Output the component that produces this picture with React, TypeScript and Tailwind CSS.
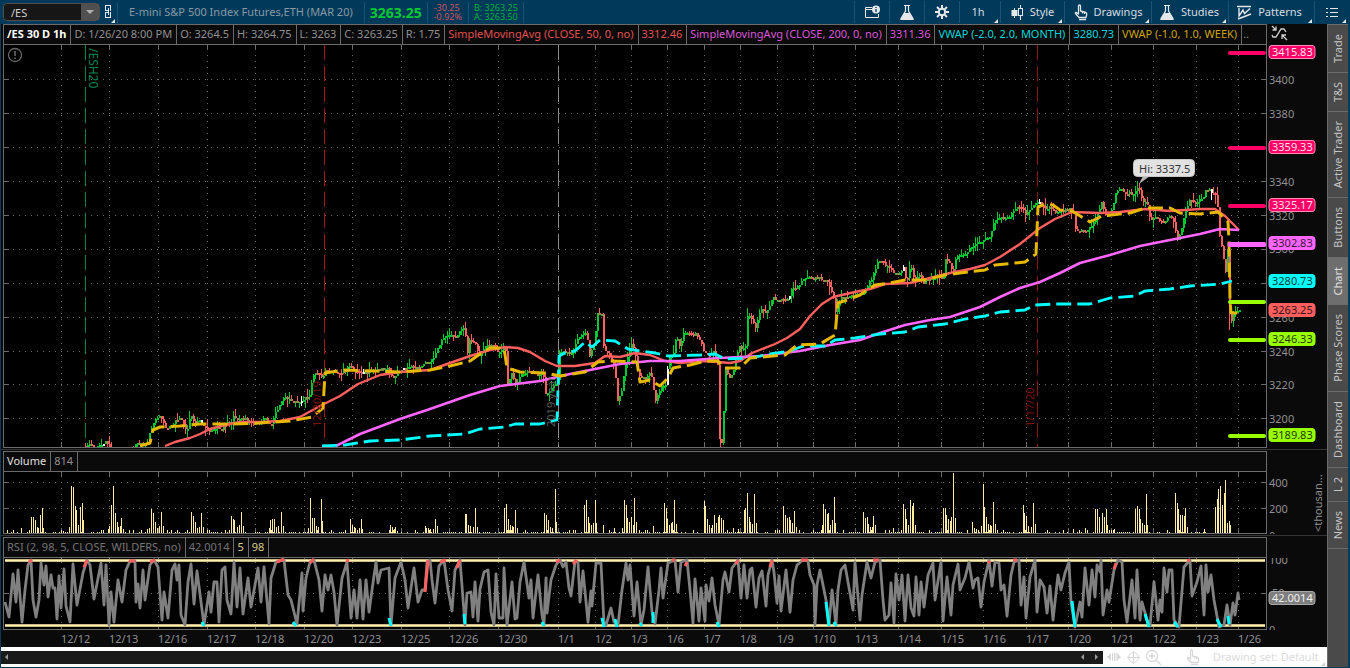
import React from 'react'

type Point = [number, number]

const RED = '#ff5f5f'
const GREEN = '#00c832'
const GOLD = '#e6b800'
const CYAN = '#00ffff'
const VIOLET = '#ff66ff'
const PINK = '#ff0066'
const LIME = '#99ff00'

const toPoints = (s: string): Point[] =>
  s.trim().split(/\s+/).map((p) => p.split(',').map(Number) as Point)

const days: [string, number][] = [
  ['12/12', 61], ['12/13', 109], ['12/16', 158], ['12/17', 207], ['12/18', 255],
  ['12/20', 304], ['12/23', 352], ['12/25', 401], ['12/26', 449], ['12/30', 498],
  ['1/1', 558], ['1/2', 595], ['1/3', 631], ['1/6', 667], ['1/7', 704],
  ['1/8', 740], ['1/9', 777], ['1/10', 813], ['1/13', 855], ['1/14', 898],
  ['1/15', 941], ['1/16', 983], ['1/17', 1026], ['1/20', 1068], ['1/21', 1111],
  ['1/22', 1153], ['1/23', 1196], ['1/26', 1238],
]

const closes = toPoints(`
  85,446 90,443 93,446 100,446 105,441 110,448 116,452 126,450 131,447 137,444 146,445 150,430 153,424 155,418
  158,416 161,419 165,427 168,428 172,424 175,419 180,418 184,427 187,430 190,416 193,420 196,423 199,419
  203,427 208,430 212,430 218,427 221,430 224,424 230,423 233,417 238,421 242,417 247,421 252,424 258,423
  264,418 270,425 274,415 279,405 284,397 290,401 298,403 304,400 309,394 313,375 317,372 322,378 325,371
  330,371 338,374 345,371 349,366 354,371 360,373 370,371 380,370 387,368 392,378 397,372 402,368 412,367
  420,367 425,363 430,360 434,357 437,348 441,340 446,335 450,336 455,337 460,330 463,329 465,337 467,354
  469,341 474,343 479,355 485,345 493,345 498,352 502,349 505,350 507,384 511,372 515,384 518,379 523,373
  530,371 538,377 542,371 545,393 551,389 557,380 559,353 565,352 571,352 575,343 580,334 586,334 589,355
  593,347 597,314 599,313 601,313 603,347 609,355 614,367 617,402 621,390 625,362 628,352 630,343 634,350
  637,370 640,377 646,380 648,369 651,378 655,402 660,387 665,385 668,360 673,352 676,336 679,347 683,334
  688,332 692,336 695,333 700,342 704,353 708,356 713,350 717,365 719,438 721,443 723,410 725,370 727,373
  730,380 734,365 738,347 742,350 745,345 747,315 753,322 755,328 760,310 766,313 772,298 777,299 782,299
  788,301 790,290 795,288 800,283 805,277 812,279 818,277 822,279 828,283 833,297 835,312 838,303 842,297
  850,295 858,294 864,292 867,285 872,277 876,265 880,258 884,264 889,267 893,272 898,274 903,268 906,282
  910,265 914,282 918,275 923,283 928,279 933,277 938,275 942,280 945,258 948,260 952,272 956,256 962,256
  967,251 973,245 978,243 984,240 990,235 994,220 998,216 1004,218 1010,216 1014,209 1020,208 1025,214
  1030,209 1035,202 1040,204 1045,208 1050,207 1055,214 1060,211 1065,210 1070,209 1073,213 1075,230
  1080,231 1085,230 1090,226 1095,221 1101,202 1105,214 1110,213 1113,202 1115,192 1120,189 1125,193
  1130,194 1135,192 1138,188 1142,200 1147,205 1150,223 1155,216 1158,219 1163,223 1168,216 1173,221
  1177,240 1181,228 1184,212 1190,199 1195,203 1200,199 1204,195 1206,188 1210,191 1215,195 1217,206
  1219,236 1222,250 1225,272 1227,250 1228,258 1229,310 1231,320 1234,310 1238,311`)

const sma50 = `165,446 175,442 190,438 200,434 210,429 225,425 240,422 260,422 280,421 300,417 320,406 340,396
  358,384 380,375 400,372 430,370 450,363 470,356 490,350 505,347 518,348 530,352 545,361 557,366 575,366
  595,363 605,356 620,357 635,353 650,355 665,361 680,363 700,361 718,362 730,363 740,361 752,353 775,344
  787,338 800,329 810,316 822,304 833,297 855,292 870,289 885,284 910,283 930,278 950,273 970,269 985,265
  1000,257 1020,244 1040,228 1055,219 1072,212 1100,213 1120,212 1145,209 1170,211 1200,209 1215,209
  1225,216 1239,230`

const sma200 = `336,446 360,434 400,419 430,409 470,395 500,386 540,381 570,374 600,368 620,364 650,361 680,361
  720,358 760,356 800,351 830,345 860,340 880,333 905,325 930,320 950,317 980,307 1000,297 1020,288 1040,282
  1060,273 1080,263 1110,255 1140,246 1170,240 1200,234 1220,229 1239,230`

const vwapMonth = `322,446 345,445 370,441 400,440 430,436 465,434 480,429 505,427 515,424 540,424 557,420 559,356
  565,353 575,351 585,342 592,347 600,340 615,341 628,349 640,351 655,353 668,356 700,355 715,354 725,359
  750,358 770,354 790,351 803,346 825,346 835,340 855,338 880,334 905,332 918,327 945,324 965,319 985,316
  1000,312 1025,310 1035,305 1055,304 1090,304 1110,298 1135,296 1145,291 1170,289 1190,286 1220,284 1232,281`

const vwapWeek = `140,446 150,443 153,430 160,427 180,426 200,424 230,424 260,423 290,421 312,417 323,408 325,373
  345,370 375,371 400,372 430,370 450,366 470,361 480,354 490,348 504,348 507,368 520,372 545,373 560,376
  585,372 598,362 610,361 637,362 640,382 650,380 660,386 668,378 673,368 690,365 705,361 718,361 724,368
  740,368 750,358 785,355 797,345 820,344 835,335 838,303 850,299 860,295 867,290 875,285 890,283 905,280
  925,280 945,275 960,273 985,270 995,265 1025,262 1036,254 1038,207 1045,204 1053,205 1060,210 1072,211
  1090,222 1102,216 1130,213 1145,208 1170,208 1180,213 1200,214 1218,212 1228,222 1229,240 1230,300
  1231,313 1238,313`

const volume = toPoints(`
  21,5 31,16 33,16 35,13 37,6 38,5 40,18 42,25 43,5 61,3 63,2 69,6 71,47 73,46 75,27 76,23 78,8 80,26 82,30
  83,13 101,3 108,4 109,7 111,28 113,47 115,20 117,11 118,6 120,7 121,15 123,4 141,3 147,4 149,5 151,24
  153,20 155,11 157,5 159,7 161,21 163,7 187,3 191,21 193,17 195,11 197,5 199,6 201,20 203,6 229,2 231,17
  233,14 234,13 237,6 239,8 241,21 243,7 269,5 270,13 272,14 274,14 276,6 278,7 281,21 283,7 308,5 310,35
  312,15 314,15 316,7 318,6 321,34 322,12 350,14 352,8 354,6 355,5 357,3 359,5 361,14 362,4 390,8 392,6
  394,4 395,6 397,2 425,7 426,5 428,5 430,4 433,4 435,14 437,7 465,19 466,19 468,8 470,7 473,6 475,25 477,6
  504,25 506,29 508,14 510,8 512,7 513,6 515,23 517,5 544,20 546,18 548,13 550,6 552,5 555,44 556,11 584,28
  586,33 588,16 589,10 591,8 593,10 595,33 596,10 603,8 614,5 622,5 624,33 626,28 627,15 629,11 631,16 633,8
  634,35 636,11 653,7 664,30 666,25 667,14 669,8 671,10 672,11 674,33 676,9 704,32 705,27 707,14 709,8 711,5
  712,8 714,18 716,10 718,16 719,18 721,15 723,13 733,5 738,4 744,23 745,25 747,40 749,16 750,11 752,9
  754,39 756,10 783,27 785,18 787,15 789,16 790,13 792,10 794,22 796,6 822,8 823,29 825,24 827,19 828,20
  830,8 832,13 834,36 835,10 863,21 865,15 867,16 868,9 870,6 872,6 873,17 875,8 893,5 903,29 905,24 906,14
  908,8 910,33 912,27 913,30 915,8 943,25 945,25 946,18 948,14 950,12 951,16 953,60 955,15 972,11 974,5
  976,4 978,3 981,7 983,49 984,26 986,16 988,9 990,8 991,7 993,31 995,9 1023,28 1024,20 1026,17 1028,7
  1031,6 1033,30 1035,9 1073,4 1085,5 1095,24 1097,24 1099,16 1102,20 1104,16 1106,24 1107,8 1114,4 1135,24
  1137,27 1139,24 1140,14 1142,10 1144,8 1146,39 1147,8 1175,40 1177,30 1178,24 1180,18 1182,18 1184,17
  1185,25 1187,6 1204,4 1215,26 1217,34 1218,44 1220,47 1222,28 1224,40 1225,53 1227,10 1229,12 1230,8`)

const rsi = `5,602 9,617 13,574 16,602 18,570 22,622 25,590 28,565 31,560 33,600 36,617 39,600 41,563 44,585 46,566
  48,597 51,575 53,588 55,588 57,619 59,576 61,608 64,569 66,606 70,622 73,564 77,605 83,573 87,560 90,565
  94,599 101,563 104,605 106,565 109,625 111,592 114,622 118,580 122,602 126,570 130,561 135,561 136,602
  138,584 140,608 143,570 145,600 150,565 154,560 158,567 162,620 164,592 168,618 172,570 175,564 177,580
  179,565 181,615 185,625 188,582 191,564 194,604 197,571 204,625 209,592 211,612 214,582 217,582 219,622
  222,570 225,567 227,600 231,614 234,562 237,607 240,568 243,614 248,578 251,607 255,585 258,568 261,602
  264,567 269,624 271,578 276,562 284,560 288,595 291,600 297,624 302,573 303,611 306,578 310,562 314,560
  319,580 322,611 325,575 328,590 331,575 334,592 337,625 342,578 347,562 351,618 354,590 357,618 360,580
  363,619 366,580 369,612 372,590 376,562 378,583 381,570 389,568 391,625 395,578 401,562 405,580 408,608
  414,568 418,602 422,590 425,590 427,562 430,560 432,580 435,603 439,566 444,560 448,590 450,600 452,611
  455,570 460,560 465,625 467,593 471,592 473,617 475,582 478,621 480,589 484,572 488,570 491,612 494,625
  496,574 499,618 503,618 504,568 507,625 512,582 515,619 517,618 520,582 524,562 529,598 531,580 533,618
  536,592 538,575 542,615 544,625 546,578 547,613 551,580 556,565 560,560 563,567 566,562 569,588 571,596
  575,561 578,562 580,602 583,571 588,622 591,591 592,606 596,563 601,563 604,624 606,625 611,608 614,622
  618,625 622,590 626,563 628,580 630,565 634,616 637,582 641,625 644,610 648,567 652,612 655,624 659,590
  661,568 663,598 668,563 675,560 678,592 681,562 687,560 690,590 693,623 695,579 699,621 701,588 705,621
  706,585 709,601 712,578 715,605 719,625 723,580 725,572 729,592 732,568 738,560 741,598 744,565 747,598
  750,570 752,568 756,607 759,578 762,571 766,606 768,575 772,560 774,572 777,603 779,576 781,611 786,570
  790,612 793,580 797,565 803,560 808,561 810,575 814,585 815,625 817,585 820,570 826,600 829,625 832,590
  836,625 838,590 841,570 845,565 848,582 853,610 855,562 860,620 862,595 867,562 871,578 875,562 880,560
  883,600 885,620 889,615 891,583 894,623 896,574 899,600 902,575 905,621 908,575 911,608 914,616 916,577
  919,615 921,582 924,607 928,575 933,563 935,600 941,562 943,621 947,577 951,615 953,585 958,564 960,590
  965,578 969,562 973,588 975,580 978,578 981,607 984,582 989,560 992,586 995,562 999,563 1001,590 1004,585
  1007,616 1011,575 1014,562 1019,560 1021,605 1024,577 1026,618 1030,577 1035,560 1037,612 1040,580
  1044,587 1047,613 1050,586 1053,620 1058,575 1061,590 1065,573 1069,562 1071,602 1075,627 1080,602
  1082,617 1085,568 1089,605 1092,570 1095,597 1097,565 1100,572 1101,560 1103,615 1107,590 1109,602
  1114,570 1118,560 1122,562 1124,600 1127,622 1132,580 1135,618 1137,570 1140,620 1142,602 1147,620
  1150,626 1154,582 1158,620 1160,600 1162,612 1164,568 1167,592 1169,570 1172,570 1174,620 1179,627
  1184,567 1190,560 1192,596 1197,582 1201,566 1204,615 1206,565 1208,592 1211,575 1214,600 1219,627
  1224,625 1227,605 1230,625 1233,603 1235,615 1238,593 1239,600`

const overbought = `M29 562L32 560M84 567L87 560M129 561H135M150 562L155 560M277 562L284 559M310 563L314 559M346 561L349 560
  M425 592L428 560M440 562L446 560M457 568L460 560M556 562L560 560M573 564L577 560M672 560H675M685 566L687 562
  M736 564L738 560M770 567L772 560M801 560H808M873 560H879M988 563L990 561M1013 560H1017M1114 569L1116 563
  M1187 561L1190 560`
const oversold = `M202 622L204 626M293 622L296 626M389 618L391 626M464 614L465 624M542 622L544 626M602 618L604 627
  M615 619L617 627M640 623L642 626M653 612V623M717 622L719 627M826 602L829 626M834 622L836 626M1072 601L1075 627
  M1145 614L1149 627M1174 622L1178 627M1217 619L1221 627M1228 616L1229 624`

// small seeded generator, so that every render gives the same bars
const noise = (n: number) => {
  const v = Math.sin(n * 127.1 + 11.7) * 43758.5453
  return v - Math.floor(v)
}

const priceAt = (x: number) => {
  for (let i = 1; i < closes.length; i++) {
    const [x0, y0] = closes[i - 1]
    const [x1, y1] = closes[i]
    if (x <= x1) return y0 + ((y1 - y0) * (x - x0)) / (x1 - x0)
  }
  return closes[closes.length - 1][1]
}

const candles = (() => {
  const out: { x: number; top: number; bottom: number; high: number; low: number; color: string }[] = []
  let prev = 446
  for (let x = 85; x <= 1239; x += 2) {
    const close = Math.round(priceAt(x) + (noise(x) - 0.5) * 3)
    const top = Math.min(prev, close)
    const bottom = Math.max(prev, close)
    out.push({
      x,
      top,
      bottom: Math.max(bottom, top + 2),
      high: top - Math.round(noise(x + 3) ** 3 * 8),
      low: bottom + Math.round(noise(x + 5) ** 3 * 9),
      color: noise(x + 9) > 0.98 ? '#ffffff' : close < prev || (close === prev && noise(x + 1) > 0.5) ? GREEN : RED,
    })
    prev = close
  }
  return out
})()

const Grid = ({ top, bottom, rows }: { top: number; bottom: number; rows: number[] }) => (
  <g stroke="#6b6b6b" strokeWidth="1" shapeRendering="crispEdges">
    {rows.map((y) => (
      <g key={y}>
        <path d={`M13 ${y}.5H1266`} strokeDasharray="1 5" />
        <path d={`M4 ${y}.5h5M1261 ${y}.5h5`} />
      </g>
    ))}
    {days.map(([d, x]) => (
      <g key={d}>
        <path d={`M${x}.5 ${top + 10}V${bottom}`} strokeDasharray="1 5" />
        <path d={`M${x}.5 ${top}v5M${x}.5 ${bottom}v-5`} />
      </g>
    ))}
  </g>
)

const Badge = ({ y, label, fill, color, stroke }: { y: number; label: string; fill: string; color: string; stroke?: string }) => (
  <g>
    <rect x="1269" y={y - 6.5} width="46" height="13" rx="3" fill={fill} stroke={stroke || fill} />
    <text x="1272" y={y + 4} fill={color}>{label}</text>
  </g>
)

const priceLabels: [number, string][] = [
  [46, '3420'], [80, '3400'], [114, '3380'], [147, '3360'], [182, '3340'], [216, '3320'],
  [249, '3300'], [283, '3280'], [318, '3260'], [352, '3240'], [385, '3220'], [419, '3200'],
]

const PriceChart = () => (
  <svg viewBox="4 45 1262 402" preserveAspectRatio="none" className="block h-[402px] min-w-0 flex-1 bg-black">
    <Grid top={45} bottom={447} rows={[79, 113, 147, 181, 215, 249, 283, 317, 351, 384, 418]} />
    <g shapeRendering="crispEdges" strokeDasharray="15 6">
      <path d="M85.5 45V447" stroke="#008552" />
      <path d="M324.5 45V447" stroke="#a61515" />
      <path d="M558.5 45V447" stroke="#8a8a8a" />
      <path d="M1037.5 45V447" stroke="#8a1515" />
    </g>
    <text transform="translate(89 48) rotate(90)" fill="#008552" className="text-[12px]">/ESH20</text>
    <g>
      <circle cx="15" cy="55" r="6.5" fill="none" stroke="#666" strokeWidth="1.3" />
      <path d="M15 51v5M15 57.5v1.5" stroke="#777" strokeWidth="1.4" />
    </g>
    <g shapeRendering="crispEdges">
      {candles.map((c) => (
        <g key={c.x} fill={c.color}>
          <rect x={c.x} y={c.top} width="2" height={c.bottom - c.top} />
          <rect x={c.x} y={c.high} width="1" height={c.low - c.high} />
        </g>
      ))}
      <rect x="720" y="420" width="1" height="27" fill={RED} />
      <rect x="1229" y="300" width="1" height="30" fill={RED} />
    </g>
    <g fill="none" strokeLinejoin="round">
      <polyline points={sma50} stroke={RED} strokeWidth="2.4" />
      <polyline points={sma200} stroke={VIOLET} strokeWidth="2.6" />
      <polyline points={vwapMonth} stroke={CYAN} strokeWidth="2.8" strokeDasharray="15 6" />
      <polyline points={vwapWeek} stroke={GOLD} strokeWidth="3" strokeDasharray="15 6" />
    </g>
    <text transform="translate(321 427) rotate(-90)" fill="#7a1010">12/20/19</text>
    <text transform="translate(555 427) rotate(-90)" fill="#5a5a5a">2019 year</text>
    <text transform="translate(1034 427) rotate(-90)" fill="#7a1010">1/17/20</text>
    <g strokeWidth="4" strokeLinecap="round">
      <path d="M1230 53H1264M1230 148H1264M1230 206H1264" stroke={PINK} />
      <path d="M1230 244.5H1264" stroke={VIOLET} strokeWidth="5" />
      <path d="M1230 302H1264M1230 340H1264M1230 436H1264" stroke={LIME} />
    </g>
    <path d="M1139 184L1143 176H1150Z" fill="#b5b5b5" />
    <rect x="1133.5" y="159.5" width="61" height="17" rx="4" fill="#e2e2e2" stroke="#c8c8c8" />
    <text x="1139" y="173" fill="#333">Hi: 3337.5</text>
  </svg>
)

const AxisSvg = ({ top, height, className, children }: { top: number; height: number; className: string; children: React.ReactNode }) => (
  <svg viewBox={`1267 ${top} 60 ${height}`} className={`block w-[60px] shrink-0 overflow-hidden ${className}`}>
    {children}
  </svg>
)

const VolumeChart = () => (
  <svg viewBox="4 472 1262 61" preserveAspectRatio="none" className="block h-[61px] min-w-0 flex-1 bg-black">
    <Grid top={472} bottom={533} rows={[482, 508]} />
    <g fill="#ffe9a3" shapeRendering="crispEdges">
      {Array.from({ length: 600 }, (_, i) => 7 + i * 2)
        .filter((x) => x < 1236 && noise(x + 21) > 0.45)
        .map((x) => (
          <rect key={x} x={x} y={noise(x) > 0.8 ? 530 : 532} width="1" height="3" />
        ))}
      {volume.map(([x, h]) => (
        <rect key={x} x={x} y={533 - h} width="1" height={h} />
      ))}
    </g>
  </svg>
)

const RsiChart = () => (
  <svg viewBox="4 558 1262 71" preserveAspectRatio="none" className="block h-[71px] min-w-0 flex-1 bg-black">
    <Grid top={558} bottom={629} rows={[593]} />
    <path d="M5 560.5H1265M5 625.5H1265" stroke="#c9b985" strokeWidth="3" />
    <path d="M5 560.5H1265M5 625.5H1265" stroke="#fff0b0" strokeWidth="1" />
    <polyline points={rsi} fill="none" stroke="#808080" strokeWidth="2.8" strokeLinejoin="round" />
    <path d={overbought} stroke={RED} strokeWidth="3" />
    <path d={oversold} stroke={CYAN} strokeWidth="3" />
  </svg>
)

const Cell = ({ className = '', children }: { className?: string; children: React.ReactNode }) => (
  <span className={`flex h-full shrink-0 items-center border-r border-[#6b6b6b] pr-[4px] pl-[3px] whitespace-nowrap ${className}`}>
    {children}
  </span>
)

const PaneHeader = ({ side, children }: { side?: React.ReactNode; children: React.ReactNode }) => (
  <div className="flex">
    <div className="flex h-[21px] min-w-0 flex-1 overflow-hidden border border-[#6b6b6b] text-[#8f8f8f]">{children}</div>
    <div className="w-[60px] shrink-0">{side}</div>
  </div>
)

const ChartRow = ({ chart, axis }: { chart: React.ReactNode; axis: React.ReactNode }) => (
  <div className="flex">
    <div className="flex min-w-0 flex-1 border-x border-b border-[#6b6b6b]">{chart}</div>
    {axis}
  </div>
)

const Flask = () => (
  <svg width="16" height="17" viewBox="0 0 16 17" fill="none" stroke="#e4e8ea" strokeWidth="1.2">
    <path d="M5 1.5H11M6.5 1.5V7L2 14.5Q1.5 15.5 2.5 15.5H13.5Q14.5 15.5 14 14.5L9.5 7V1.5" />
    <path d="M5.5 9.5H10.5L13.5 15H2.5Z" fill="#e4e8ea" />
  </svg>
)

const Gear = () => (
  <svg width="14" height="14" viewBox="0 0 14 14" fill="none" stroke="#e4e8ea" strokeWidth="2">
    <circle cx="7" cy="7" r="3.2" />
    <path d="M7 0V3M7 11V14M0 7H3M11 7H14M2 2L4.3 4.3M9.7 9.7L12 12M12 2L9.7 4.3M4.3 9.7L2 12" />
  </svg>
)

const Hand = ({ color = '#e4e8ea' }: { color?: string }) => (
  <svg width="14" height="17" viewBox="0 0 14 17" fill="none" stroke={color} strokeWidth="1.3" strokeLinejoin="round">
    <path d="M4.5 10V2Q4.5 1 5.5 1T6.5 2V7L12 8.5Q13 9 12.7 10.5L12 13.5H5L1.5 9.5Q1 8.5 2 8.3Z" />
    <path d="M5 15.5H12M8.5 7.5V9.5M10.5 8V10" />
  </svg>
)

const Candles = () => (
  <svg width="13" height="15" viewBox="0 0 13 15" stroke="#e4e8ea">
    <path d="M3.5 3V13M9.5 0V3M9.5 11V15" />
    <rect x="1" y="5.5" width="5" height="5" fill="#e4e8ea" />
    <rect x="7.5" y="3.5" width="4" height="7" fill="none" />
  </svg>
)

const InfoWindow = () => (
  <svg width="17" height="14" viewBox="0 0 17 14" fill="none" stroke="#e4e8ea">
    <path d="M8 2.5H1.5V12.5H14.5V9M1.5 4.5H8" />
    <circle cx="12" cy="4.5" r="4" fill="#e4e8ea" stroke="none" />
    <path d="M12 4V7M12 2V3" stroke="#003a5a" strokeWidth="1.3" />
  </svg>
)

const PatternIcon = () => (
  <svg width="15" height="15" viewBox="0 0 15 15" fill="none" stroke="#e4e8ea" strokeWidth="1.4">
    <path d="M0 1.5H14M1 14L14 9" />
    <path d="M2 3V11L6 5L7.500 8.500L13 3.500" />
  </svg>
)

const ListIcon = () => (
  <svg width="12" height="11" viewBox="0 0 12 11" stroke="#e4e8ea" shapeRendering="crispEdges">
    <path d="M0 1.5H2M4 1.5H12M0 5.5H2M4 5.5H12M0 9.5H2M4 9.5H12" />
  </svg>
)

const LinkIcon = () => (
  <svg width="7" height="14" viewBox="0 0 7 14" fill="none" stroke="#e4e8ea" shapeRendering="crispEdges">
    <path d="M2.5 5.5H.5V.5H5.5V5.5H4.5M2.5 7.5H.5V12.5H5.5V7.5H4.5M3.5 3V10" />
  </svg>
)

const Corner = ({ color = '#e4e8ea' }: { color?: string }) => (
  <svg width="4" height="4" viewBox="0 0 4 4" className="absolute right-[2px] bottom-0">
    <path d="M4 0V4H0Z" fill={color} />
  </svg>
)

const tools = [
  { name: 'Chart info', icon: <InfoWindow />, width: 'w-[35px]' },
  { name: 'Edit studies', icon: <Flask />, width: 'w-[35px]' },
  { name: 'Settings', icon: <Gear />, width: 'w-[35px]' },
  { name: 'Time frame', label: '1h', width: 'w-[41px] pr-[4px]', menu: true },
  { name: 'Style', icon: <Candles />, label: 'Style', width: 'w-[64px]', menu: true },
  { name: 'Drawings', icon: <Hand />, label: 'Drawings', width: 'w-[87px]', menu: true },
  { name: 'Studies', icon: <Flask />, label: 'Studies', width: 'w-[77px] pr-[2px]', menu: true },
  { name: 'Patterns', icon: <PatternIcon />, label: 'Patterns', width: 'w-[86px] pr-[4px]', menu: true },
  { name: 'More', icon: <ListIcon />, width: 'w-[34px]', menu: true },
]

const TopBar = () => (
  <header className="flex h-6 shrink-0 items-center bg-[#003a5a] pr-[2px] pl-[3px]">
    <div className="flex h-[18px] w-[97px] items-center rounded-sm border border-[#4d4d4d] bg-[#161616]">
      <input aria-label="Symbol" defaultValue="/ES" className="h-full w-0 flex-1 bg-transparent pl-[7px] text-[#d0d0d0] outline-none" />
      <button aria-label="Symbol list" className="flex h-full w-[18px] items-center justify-center bg-[#505050]">
        <svg width="8" height="4" viewBox="0 0 8 4"><path d="M0 0H8L4 4Z" fill="#b0b0b0" /></svg>
      </button>
    </div>
    <button aria-label="Link" className="relative flex h-[22px] w-[17px] items-center justify-center">
      <LinkIcon />
      <Corner />
    </button>
    <h1 className="flex h-[21px] items-center border-x border-[#1d5272] px-[11px] whitespace-nowrap text-[#8799a5]">
      E-mini S&amp;P 500 Index Futures,ETH (MAR 20)
    </h1>
    <strong className="flex h-[21px] items-center border-r border-[#1d5272] px-[5px] text-[14px] font-bold text-[#00c832]">3263.25</strong>
    <div className="flex h-[21px] flex-col justify-center border-r border-[#1d5272] px-[6px] text-[9px] leading-[9px] text-[#d0505f]">
      <span>-30.25</span>
      <span>-0.92%</span>
    </div>
    <div className="flex h-[21px] flex-col justify-center border-r border-[#1d5272] px-[5px] text-[9px] leading-[9px] text-[#00b038]">
      <span>B: 3263.25</span>
      <span>A: 3263.50</span>
    </div>
    <nav className="ml-auto flex">
      {tools.map((t) => (
        <button
          key={t.name}
          aria-label={t.name}
          className={`relative flex h-[22px] items-center justify-center gap-[6px] border-l border-[#1d5272] text-[#d5dde2] ${t.width}`}
        >
          {t.icon}
          {t.label && <span>{t.label}</span>}
          {t.menu && <Corner />}
        </button>
      ))}
    </nav>
  </header>
)

const tabs = ['Trade', 'T&S', 'Active Trader', 'Buttons', 'Chart', 'Phase Scores', 'Dashboard', 'L 2', 'News']

const SideTabs = () => (
  <aside className="mr-[2px] flex w-[21px] shrink-0 flex-col border-t border-l border-[#6b6b6b] bg-[#4a4a4a]">
    {tabs.map((t) => (
      <button
        key={t}
        className={`flex w-full items-center justify-center border-b border-[#6b6b6b] py-[9px] leading-[20px] ${
          t === 'Chart' ? 'bg-[#6e6e6e] text-[#e0e0e0]' : 'text-[#c4c4c4]'
        }`}
      >
        <span className="rotate-180 whitespace-nowrap [writing-mode:vertical-rl]">{t}</span>
      </button>
    ))}
  </aside>
)

const Footer = () => (
  <footer className="flex h-5 items-center bg-white text-[#dcdcdc]">
    <div className="flex h-[13px] min-w-0 flex-1 items-center bg-[#1a1a1a]">
      <button aria-label="Scroll left" className="pl-1">
        <svg width="4" height="6" viewBox="0 0 4 6"><path d="M3 0V6L0 3Z" fill="#999" /></svg>
      </button>
      <button aria-label="Step left" className="ml-auto">
        <svg width="4" height="6" viewBox="0 0 4 6"><path d="M3 0V6L0 3Z" fill="#999" /></svg>
      </button>
      <button aria-label="Step right" className="pr-1 pl-[10px]">
        <svg width="4" height="6" viewBox="0 0 4 6"><path d="M0 0V6L3 3Z" fill="#999" /></svg>
      </button>
    </div>
    <div className="relative flex w-[224px] items-center pl-[4px]">
      <svg width="14" height="10" viewBox="0 0 14 10" fill="#d8d8d8">
        <path d="M4 1V9L0 5ZM10 1V9L14 5ZM5 1H6V9H5ZM7 1H8V9H7ZM8.5 1H9.5V9H8.5Z" />
      </svg>
      <svg width="13" height="13" viewBox="0 0 13 13" className="ml-[6px]" fill="none" stroke="#d8d8d8">
        <circle cx="6.5" cy="6.5" r="5" />
        <path d="M6.5 0V13M0 6.5H13" />
      </svg>
      <svg width="17" height="17" viewBox="0 0 17 17" className="ml-[5px]" fill="none" stroke="#d8d8d8" strokeWidth="1.3">
        <circle cx="7" cy="7" r="5.5" />
        <path d="M4 7H10M7 4V10M11 11L16 16" />
      </svg>
      <span className="ml-[24px]"><Hand color="#d8d8d8" /></span>
      <span className="ml-[13px] whitespace-nowrap">Drawing set: Default</span>
      <Corner color="#cfcfcf" />
    </div>
  </footer>
)

export default function App() {
  return (
    <div className="flex min-h-screen flex-col bg-[#003a5a] pb-px font-['Noto_Sans',sans-serif] text-[11px]">
      <TopBar />
      <div className="flex flex-1">
        <main className="ml-px flex min-w-0 flex-1 flex-col bg-[#0a0a0a]">
          <div className="pl-[2px]">
            <PaneHeader
              side={
                <svg width="18" height="18" viewBox="0 0 18 18" className="ml-[4px]" fill="none" stroke="#d0d0d0" strokeWidth="1.3">
                  <path d="M1 11L2 13H5L10 5H13L15 8" />
                  <path d="M1 2L5 6M5 2.5V6H1.5M16 16L11 11M11 15V11H15" />
                </svg>
              }
            >
              <Cell className="font-bold text-white">/ES 30 D 1h</Cell>
              <Cell>D: 1/26/20 8:00 PM</Cell>
              <Cell>O: 3264.5</Cell>
              <Cell>H: 3264.75</Cell>
              <Cell>L: 3263</Cell>
              <Cell>C: 3263.25</Cell>
              <Cell>R: 1.75</Cell>
              <Cell className="text-[#e0504f]">SimpleMovingAvg (CLOSE, 50, 0, no)</Cell>
              <Cell className="text-[#e0504f]">3312.46</Cell>
              <Cell className="text-[#d957d9]">SimpleMovingAvg (CLOSE, 200, 0, no)</Cell>
              <Cell className="text-[#d957d9]">3311.36</Cell>
              <Cell className="text-[#00d5d5]">VWAP (-2.0, 2.0, MONTH)</Cell>
              <Cell className="text-[#00d5d5]">3280.73</Cell>
              <Cell className="text-[#c9a20a]">VWAP (-1.0, 1.0, WEEK)</Cell>
              <span className="flex items-center pl-px">..</span>
            </PaneHeader>
            <ChartRow
              chart={<PriceChart />}
              axis={
                <AxisSvg top={45} height={403} className="h-[403px]">
                  {priceLabels.map(([y, t]) => (
                    <text key={t} x="1269" y={y + 4} fill="#8f8f8f">{t}</text>
                  ))}
                  <Badge y={52} label="3415.83" fill={PINK} color="#ffe0ea" stroke="#ff8ab5" />
                  <Badge y={147} label="3359.33" fill={PINK} color="#ffe0ea" stroke="#ff8ab5" />
                  <Badge y={205} label="3325.17" fill={PINK} color="#ffe0ea" stroke="#ff8ab5" />
                  <Badge y={243} label="3302.83" fill={VIOLET} color="#3d183d" />
                  <Badge y={281} label="3280.73" fill={CYAN} color="#0a3d3d" />
                  <Badge y={310} label="3263.25" fill={RED} color="#3d1414" />
                  <Badge y={339} label="3246.33" fill={LIME} color="#253d00" />
                  <Badge y={435} label="3189.83" fill={LIME} color="#253d00" />
                </AxisSvg>
              }
            />
          </div>

          <div className="mt-px border-t border-[#333] pt-px pl-[2px]">
            <PaneHeader>
              <Cell className="text-[#e0e0e0]">Volume</Cell>
              <Cell className="text-[#8f8f8f]">814</Cell>
            </PaneHeader>
            <ChartRow
              chart={<VolumeChart />}
              axis={
                <AxisSvg top={472} height={62} className="h-[62px]">
                  <g fill="#8f8f8f">
                    <text x="1269" y="487">400</text>
                    <text x="1269" y="513">200</text>
                    <text x="1269" y="540">0</text>
                    <text transform="translate(1322 532) rotate(-90)">&lt;thousan...</text>
                  </g>
                </AxisSvg>
              }
            />
          </div>

          <div className="mt-px border-t border-[#333] pt-px pl-[2px]">
            <PaneHeader>
              <Cell className="text-[#747474]">RSI (2, 98, 5, CLOSE, WILDERS, no)</Cell>
              <Cell className="text-[#747474]">42.0014</Cell>
              <Cell className="text-[#d8c88c]">5</Cell>
              <Cell className="text-[#d8c88c]">98</Cell>
            </PaneHeader>
            <ChartRow
              chart={<RsiChart />}
              axis={
                <AxisSvg top={558} height={72} className="h-[72px]">
                  <g fill="#8f8f8f">
                    <text x="1269" y="564">100</text>
                    <text x="1272" y="597">50</text>
                    <text x="1269" y="634">0</text>
                  </g>
                  <Badge y={598} label="42.0014" fill="#7d7d7d" color="#f0f0f0" stroke="#a8a8a8" />
                </AxisSvg>
              }
            />
            <svg viewBox="3 630 1324 17" preserveAspectRatio="none" className="block h-[17px] w-full" fill="#8f8f8f">
              {days.map(([d, x]) => (
                <text key={d} x={x} y="643">{d}</text>
              ))}
            </svg>
          </div>
          <Footer />
        </main>
        <SideTabs />
      </div>
    </div>
  )
}
